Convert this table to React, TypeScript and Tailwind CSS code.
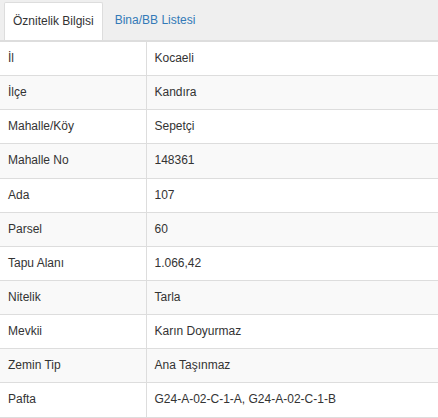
const rows: [string, string][] = [
  ['İl', 'Kocaeli'],
  ['İlçe', 'Kandıra'],
  ['Mahalle/Köy', 'Sepetçi'],
  ['Mahalle No', '148361'],
  ['Ada', '107'],
  ['Parsel', '60'],
  ['Tapu Alanı', '1.066,42'],
  ['Nitelik', 'Tarla'],
  ['Mevkii', 'Karın Doyurmaz'],
  ['Zemin Tip', 'Ana Taşınmaz'],
  ['Pafta', 'G24-A-02-C-1-A, G24-A-02-C-1-B'],
];

export default function App() {
  return (
    <div className="w-[438px] h-[418px] overflow-hidden bg-white text-[12px] leading-[1.42857] text-[#333] font-['Liberation_Sans',Arial,sans-serif]">
      {/* Tabs */}
      <div className="flex items-end h-[42px] bg-[#efefef] pl-[4px] border-b-2 border-[#dddddd]">
        <div className="h-[38px] px-[8px] flex items-center bg-white border border-b-0 border-[#dddddd] rounded-t-[2px]">
          Öznitelik Bilgisi
        </div>
        <div className="h-[38px] px-[12px] flex items-center text-[#337ab7]">Bina/BB Listesi</div>
      </div>

      {/* Attribute table */}
      <table className="w-full border-collapse">
        <tbody>
          {rows.map(([k, v], i) => (
            <tr key={k} className={i % 2 === 1 ? 'bg-[#f9f9f9]' : 'bg-white'}>
              <td className="w-[146px] p-[8px] border-b border-r border-[#dddddd] align-middle">{k}</td>
              <td className="p-[8px] border-b border-[#dddddd] align-middle">{v}</td>
            </tr>
          ))}
        </tbody>
      </table>
    </div>
  );
}
